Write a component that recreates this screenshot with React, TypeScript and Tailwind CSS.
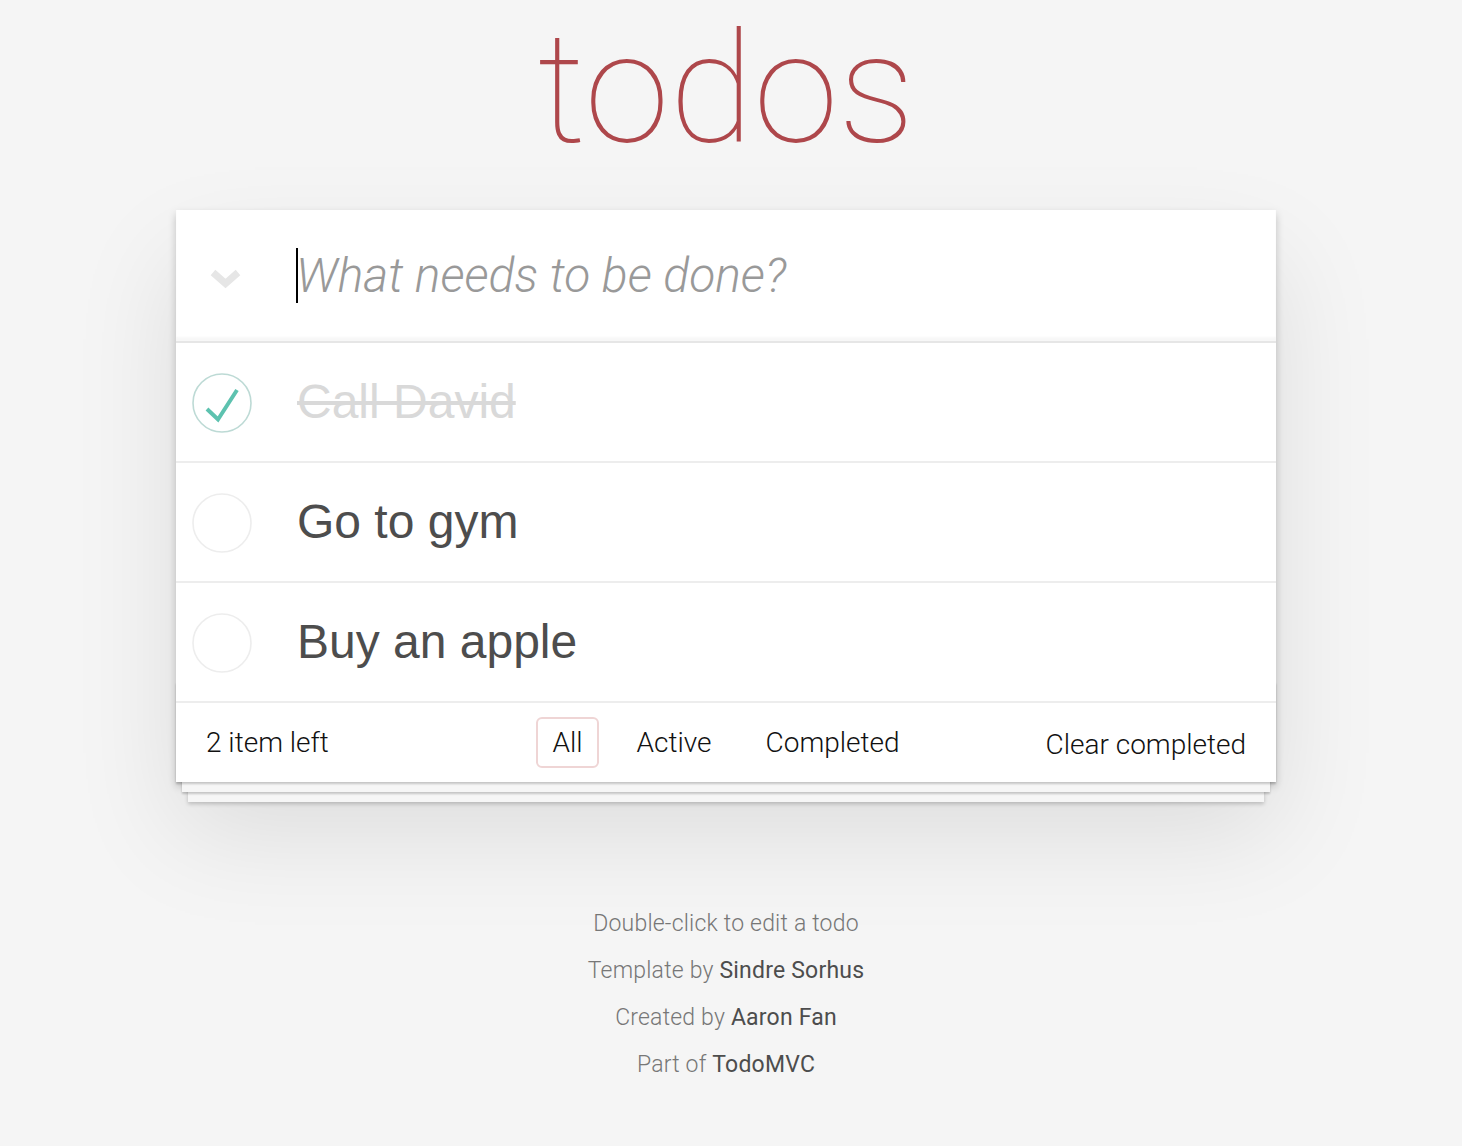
import React from "react";

const light = { fontFamily: "Roboto, 'Liberation Sans', sans-serif" };

function Check({ done }: { done: boolean }) {
  return (
    <svg width="60" height="60" viewBox="0 0 60 60" className="absolute left-[16px] top-1/2 -translate-y-1/2 mt-[1px]">
      <circle cx="30" cy="30" r="29" fill="none" stroke={done ? "#bddad5" : "#ededed"} strokeWidth="1.6" />
      {done && <path d="M15 36 L26 46.5 L45 17" fill="none" stroke="#5dc2af" strokeWidth="4" />}
    </svg>
  );
}

function Item({ text, done }: { text: string; done?: boolean }) {
  return (
    <li className="relative h-[120px] border-b-2 border-[#ededed] flex items-center">
      <Check done={!!done} />
      <span
        className={
          "pl-[121px] text-[48px] leading-[1.2] " +
          (done ? "text-[#d9d9d9] line-through" : "text-[#4d4d4d]")
        }
        style={{ fontFamily: "'Liberation Sans', Arial, sans-serif" }}
      >
        {text}
      </span>
    </li>
  );
}

export default function App() {
  return (
    <div className="min-h-screen bg-[#f5f5f5] flex flex-col items-center pb-10 pr-[10px]" style={light}>
      <h1 className="text-[154px] leading-none font-thin text-[#ae474b] pt-[13px] pb-[43px]">todos</h1>
      <section className="relative w-[1100px] bg-white shadow-[0_4px_8px_0_rgba(0,0,0,0.2),0_50px_100px_0_rgba(0,0,0,0.1)]">
        <header className="relative">
          <svg width="32" height="22" viewBox="0 0 32 22" className="absolute left-[34px] top-[59px]">
            <polyline points="3,3.5 15.5,14.5 28,3.5" fill="none" stroke="#e6e6e6" strokeWidth="7" strokeLinejoin="miter" />
          </svg>
          <input
            className="block w-full h-[131px] pl-[120px] pr-8 text-[48px] leading-[1.4] font-light italic bg-transparent outline-none placeholder:text-[#999999] shadow-[inset_0_-4px_2px_rgba(0,0,0,0.03)]"
            placeholder="What needs to be done?"
            readOnly
          />
          <div className="absolute left-[120px] top-[38px] w-[2px] h-[55px] bg-black" />
        </header>
        <ul className="border-t-2 border-[#e6e6e6]">
          <Item text="Call David" done />
          <Item text="Go to gym" />
          <Item text="Buy an apple" />
        </ul>
        <footer className="relative h-[79px] px-[30px] flex items-center justify-between text-[28px] font-light text-[#111] before:content-[''] before:absolute before:inset-x-0 before:bottom-0 before:h-[100px] before:overflow-hidden before:shadow-[0_2px_2px_rgba(0,0,0,0.2),0_16px_0_-6px_#f6f6f6,0_18px_2px_-6px_rgba(0,0,0,0.2),0_32px_0_-12px_#f6f6f6,0_34px_4px_-12px_rgba(0,0,0,0.2)]">
          <span className="relative">2 item left</span>
          <ul className="absolute inset-x-0 top-0 h-full flex items-center justify-center gap-[22px]">
            <li className="border-2 border-[#efd5d5] rounded-[6px] px-[14px] h-[51px] flex items-center">All</li>
            <li className="border-2 border-transparent rounded-[6px] px-[14px] h-[51px] flex items-center">Active</li>
            <li className="border-2 border-transparent rounded-[6px] px-[14px] h-[51px] flex items-center">Completed</li>
          </ul>
          <span className="relative mt-[5px]">Clear completed</span>
        </footer>
      </section>
      <div className="mt-[130px] flex flex-col items-center gap-[24px] text-[23px] leading-none font-light text-[#777]">
        <p className="tracking-[0.2px]">Double-click to edit a todo</p>
        <p className="tracking-[0.2px]">
          Template by <span className="font-normal text-[#4d4d4d]">Sindre Sorhus</span>
        </p>
        <p className="tracking-[0.2px]">
          Created by <span className="font-normal text-[#4d4d4d]">Aaron Fan</span>
        </p>
        <p className="tracking-[0.2px]">
          Part of <span className="font-normal text-[#4d4d4d]">TodoMVC</span>
        </p>
      </div>
    </div>
  );
}
